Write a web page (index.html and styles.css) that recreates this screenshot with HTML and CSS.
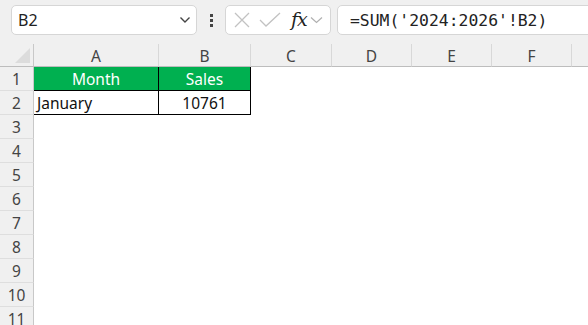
FILE: index.html
```html
<!DOCTYPE html>
<html lang="en">
<head>
    <meta charset="UTF-8">
    <title>Sheet</title>
    <link rel="stylesheet" href="styles.css">
</head>
<body>
    <div class="toolbar">
        <div class="name-box">
            <span>B2</span>
            <svg class="chev" width="12" height="8" viewBox="0 0 12 8"><path d="M1.5 1.5 L6 6 L10.5 1.5" fill="none" stroke="#444" stroke-width="1.4"/></svg>
        </div>
        <div class="dots"><i></i><i></i><i></i></div>
        <div class="tools">
            <svg width="16" height="16" viewBox="0 0 16 16"><path d="M1 1 L15 15 M15 1 L1 15" stroke="#c2c2c2" stroke-width="1.3"/></svg>
            <svg width="22" height="16" viewBox="0 0 22 16"><path d="M1 8 L7 14 L21 1" fill="none" stroke="#c2c2c2" stroke-width="1.3"/></svg>
            <span class="fx">fx</span>
            <svg width="13" height="8" viewBox="0 0 13 8"><path d="M1 1.5 L6.5 6.5 L12 1.5" fill="none" stroke="#b0b0b0" stroke-width="1.2"/></svg>
        </div>
        <div class="formula">=SUM('2024:2026'!B2)</div>
    </div>

    <div class="sheet">
        <div class="corner"><span class="tri"></span></div>
        <div class="col-head">A</div>
        <div class="col-head">B</div>
        <div class="col-head">C</div>
        <div class="col-head">D</div>
        <div class="col-head">E</div>
        <div class="col-head">F</div>
        <div class="col-head last"></div>

        <div class="row-head">1</div>
        <div class="cell head-cell">Month</div>
        <div class="cell head-cell">Sales</div>
        <div class="cell"></div><div class="cell"></div><div class="cell"></div><div class="cell"></div><div class="cell"></div>

        <div class="row-head">2</div>
        <div class="cell data-cell">January</div>
        <div class="cell data-cell center">10761</div>
        <div class="cell"></div><div class="cell"></div><div class="cell"></div><div class="cell"></div><div class="cell"></div>

        <div class="row-head">3</div><div class="cell span"></div>
        <div class="row-head">4</div><div class="cell span"></div>
        <div class="row-head">5</div><div class="cell span"></div>
        <div class="row-head">6</div><div class="cell span"></div>
        <div class="row-head">7</div><div class="cell span"></div>
        <div class="row-head">8</div><div class="cell span"></div>
        <div class="row-head">9</div><div class="cell span"></div>
        <div class="row-head">10</div><div class="cell span"></div>
        <div class="row-head">11</div><div class="cell span"></div>
    </div>
</body>
</html>
```

FILE: styles.css
```css
* {
    margin: 0;
    padding: 0;
    box-sizing: border-box;
}

body {
    background: #fff;
    font-family: 'Noto Sans', sans-serif;
    color: #222;
    overflow: hidden;
}

/* Barra de fórmulas */
.toolbar {
    height: 44px;
    background: #f0f0f0;
    display: flex;
    align-items: flex-start;
    padding: 5px 0 0 11px;
}

.name-box,
.tools,
.formula {
    height: 30px;
    background: #fff;
    border: 1px solid #d6d6d6;
    border-radius: 5px;
    display: flex;
    align-items: center;
}

.name-box {
    width: 186px;
    padding: 0 5px 0 6px;
    justify-content: space-between;
    font-size: 16px;
    color: #222;
}

.dots {
    width: 28px;
    display: flex;
    flex-direction: column;
    align-items: center;
    gap: 2px;
    padding-top: 9px;
}

.dots i {
    width: 3px;
    height: 3px;
    background: #444;
}

.tools {
    width: 106px;
    padding: 0 0 0 8px;
    gap: 9px;
}

.fx {
    font-family: 'DejaVu Serif', serif;
    font-style: italic;
    font-size: 19px;
    color: #222;
    margin-left: 1px;
    margin-right: -6px;
    line-height: 1;
    padding-bottom: 2px;
    letter-spacing: -1px;
}

.formula {
    flex: 1;
    margin-left: 6px;
    margin-right: -10px;
    padding-left: 12px;
    font-family: 'DejaVu Sans Mono', monospace;
    font-size: 16.4px;
    color: #222;
}

/* Hoja */
.sheet {
    display: grid;
    grid-template-columns: 34px 125px 92px 81px 80px 80px 80px 1fr;
    grid-template-rows: 23px;
    grid-auto-rows: 24px;
}

.corner,
.col-head,
.row-head {
    background: #f0f0f0;
    color: #444;
    font-size: 15.5px;
    display: flex;
    align-items: center;
    justify-content: center;
}

.corner {
    border-right: 1px solid #c8c8c8;
    border-bottom: 1px solid #bdbdbd;
    position: relative;
}

.tri {
    position: absolute;
    right: 3px;
    bottom: 3px;
    width: 15px;
    height: 15px;
    background: #dcdcdc;
    clip-path: polygon(100% 0, 100% 100%, 0 100%);
}

.col-head {
    border-right: 1px solid #d8d8d8;
    border-bottom: 1px solid #bdbdbd;
    padding-top: 1px;
}

.col-head.last {
    border-right: none;
}

.row-head {
    border-right: 1px solid #c8c8c8;
    border-bottom: 1px solid #dedede;
}

.cell {
    font-size: 15.5px;
    display: flex;
    align-items: center;
}

.cell.span {
    grid-column: 2 / -1;
}

.head-cell,
.data-cell {
    border-right: 1px solid #000;
    border-bottom: 1px solid #000;
}

.head-cell {
    background: #00b050;
    color: #fff;
    justify-content: center;
}

.data-cell {
    padding-left: 3px;
    color: #111;
}

.data-cell.center {
    justify-content: center;
    padding-left: 0;
}
```
